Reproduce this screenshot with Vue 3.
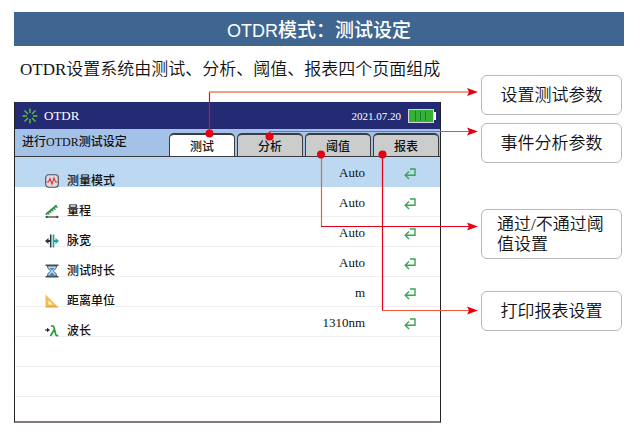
<script setup>
import { ref } from 'vue'

const tabs = ['测试', '分析', '阈值', '报表']
const active = ref('测试')

const rows = [
  { icon: 'wave', label: '测量模式', value: 'Auto' },
  { icon: 'range', label: '量程', value: 'Auto' },
  { icon: 'pulse', label: '脉宽', value: 'Auto' },
  { icon: 'timer', label: '测试时长', value: 'Auto' },
  { icon: 'unit', label: '距离单位', value: 'm' },
  { icon: 'lambda', label: '波长', value: '1310nm' },
]
const blankRows = 3
</script>

<template>
  <main class="page">
    <h1 class="title"><span class="latin">OTDR</span>模式：测试设定</h1>
    <p class="intro"><span class="regular">OTDR</span>设置系统由测试、分析、阈值、报表四个页面组成</p>

    <div class="figure">
      <section class="device">
        <header class="status">
          <svg class="logo" width="16" height="16" viewBox="0 0 16 16" fill="none" stroke="#56c63c" stroke-width="1.4">
            <path d="M8 0.500V5M8 11v4.500M0.500 8H5M11 8h4.500M2.500 2.500L6 6M10 10l3.500 3.500M13.500 2.500L10 6M6 10l-3.500 3.500" />
          </svg>
          <span class="brand">OTDR</span>
          <time class="date">2021.07.20</time>
          <svg class="battery" width="28" height="14" viewBox="0 0 28 14">
            <rect x="0.500" y="0.500" width="25" height="13" fill="#35b135" stroke="#d6d3e6" />
            <path d="M7.500 2v10M12.500 2v10M17.500 2v10" stroke="#1d7b3c" fill="none" />
            <rect x="26" y="3" width="2" height="8" fill="#fff" />
          </svg>
        </header>

        <div class="tabbar">
          <span class="caption">进行OTDR测试设定</span>
          <nav class="tabs">
            <button
              v-for="t in tabs"
              :key="t"
              type="button"
              class="tab"
              :class="{ active: t === active }"
              @click="active = t"
            >{{ t }}</button>
          </nav>
        </div>

        <table class="settings">
          <tbody>
            <tr v-for="(r, i) in rows" :key="r.label" :class="{ selected: i === 0 }">
              <th scope="row">
                <span class="name">
                  <svg class="icon" width="14" height="14" viewBox="0 0 14 14" fill="none">
                    <template v-if="r.icon === 'wave'">
                      <rect x="0.700" y="0.700" width="12.600" height="12.600" rx="3" fill="#dcdde4" stroke="#4b5260" stroke-width="1.100" />
                      <path d="M1.500 8H3.500L5 4.500L7 10L9 4L10.500 8H12.500" stroke="#e8322c" stroke-width="1.100" />
                    </template>
                    <template v-else-if="r.icon === 'range'">
                      <path d="M0.800 10.500L11.500 1.500" stroke="#2f8c46" stroke-width="1.800" />
                      <path d="M3 8.500l1.300 2.300M5 7l1.300 2.300M7 5.300l1.300 2.300M9 3.600l1.300 2.300M11 1.500l1.300 2.600" stroke="#2f8c46" stroke-width="1.200" />
                      <path d="M1 13h12" stroke="#3d3d3d" stroke-width="1.200" />
                      <path d="M0 13l2.500-1.500v3zM14 13l-2.500-1.500v3z" fill="#3d3d3d" />
                    </template>
                    <template v-else-if="r.icon === 'pulse'">
                      <path d="M5.700 0.500v13" stroke="#30343a" stroke-width="1.500" />
                      <path d="M8.500 0.500v13" stroke="#1aa6a6" stroke-width="1.700" />
                      <path d="M0 7l3.500-3v2H5v2H3.500v2z" fill="#30343a" />
                      <path d="M14 7l-3.500-3v2H9v2h1.500v2z" fill="#1aa6a6" />
                    </template>
                    <template v-else-if="r.icon === 'timer'">
                      <path d="M2.500 2h9c0 2.500-1.500 3.500-3.200 5c1.700 1.500 3.200 2.500 3.200 5h-9c0-2.500 1.500-3.500 3.200-5C4 5.500 2.500 4.500 2.500 2z" fill="#bcdcf2" stroke="#4a5560" />
                      <path d="M4.500 4h5L7 6.500zM3.500 11.500L7 8.500l3.500 3z" fill="#3288cf" />
                      <path d="M0.500 1.300h13M0.500 12.700h13" stroke="#454f59" stroke-width="1.600" />
                    </template>
                    <template v-else-if="r.icon === 'unit'">
                      <path fill-rule="evenodd" d="M0.500 0.500L13.500 13.500H0.500zM3.500 6.500v4h4z" fill="#f5bd4d" />
                      <path d="M1.500 12.800h11" stroke="#c8852b" stroke-dasharray="1 1" />
                    </template>
                    <template v-else>
                      <path d="M0 6h3" stroke="#222" stroke-width="1.200" />
                      <path d="M2 3.800L4.800 6L2 8.200z" fill="#222" />
                      <path d="M6 2.200c2-1 2.800 0.300 3.300 2.300l1.300 5.500c0.400 1.700 1.200 2 2.600 1.200M9.300 5.500L5.500 12" stroke="#22a136" stroke-width="1.700" />
                    </template>
                  </svg>
                  {{ r.label }}
                </span>
              </th>
              <td class="value">{{ r.value }}</td>
              <td class="action">
                <button type="button" class="enter" :aria-label="r.label">
                  <svg width="12" height="12" viewBox="0 0 12 12" fill="none" stroke="#3aa355" stroke-width="1.400">
                    <path d="M6 1h5v6.300H1.500M5 3.500L1.200 7.300L5 11" />
                  </svg>
                </button>
              </td>
            </tr>
            <tr v-for="n in blankRows" :key="n"><td colspan="3"></td></tr>
          </tbody>
        </table>
      </section>

      <aside class="notes">
        <p class="note">设置测试参数</p>
        <p class="note second">事件分析参数</p>
        <p class="note wrap">通过/不通过阈值设置</p>
        <p class="note last">打印报表设置</p>
      </aside>

      <svg class="leaders" viewBox="0 0 610 348" preserveAspectRatio="none" fill="none" stroke-width="1.200">
        <path d="M195.500 58V17" stroke="#d3122c" />
        <path d="M195 17H455" stroke="#f0805c" stroke-width="1.600" />
        <path d="M255.500 61V56.500H455" stroke="#ea4e30" />
        <path d="M307.500 79v72" stroke="#e8633f" />
        <path d="M307 151.500H455" stroke="#e2001a" />
        <path d="M368.500 79v156" stroke="#e2001a" />
        <path d="M368 235.500H455" stroke="#ee5a3a" />
        <g fill="#e60012">
          <circle cx="195.500" cy="58.500" r="4" />
          <circle cx="255.500" cy="61.500" r="4" />
          <circle cx="307" cy="79.500" r="4" />
          <circle cx="368.500" cy="79.500" r="4" />
          <path d="M453 13L464 17L453 21L455 17zM453 52.500L464 56.500L453 60.500L455 56.500zM453 147.500L464 151.500L453 155.500L455 151.500zM453 231.500L464 235.500L453 239.500L455 235.500z" />
        </g>
      </svg>
    </div>
  </main>
</template>

<style>
body {
  margin: 0;
  background: #fff;
}
</style>

<style scoped>
.page {
  padding: 12px 16px 16px 14px;
  font-family: "Liberation Serif", "Noto Sans CJK SC", serif;
  color: #111;
}
.title {
  margin: 0;
  height: 34px;
  line-height: 38px;
  background: #3e6691;
  color: #fff;
  text-align: center;
  font-family: "Liberation Sans", "Noto Sans CJK SC", sans-serif;
  font-size: 19px;
  font-weight: 500;
}
.latin {
  font-size: 18px;
}
.intro {
  margin: 12px 0 4px;
  padding-left: 6px;
  font-size: 17px;
  font-weight: 350;
  line-height: 24px;
}
.regular {
  font-weight: 400;
}
.figure {
  position: relative;
  display: grid;
  grid-template-columns: 427fr 141fr;
  column-gap: 40px;
  margin-top: -11px;
  padding: 27px 2px 0 0;
}
.device {
  border: 1px solid #222;
  border-top: 0;
  border-bottom: 2px solid #857a7a;
  align-self: start;
}
.status {
  display: flex;
  align-items: center;
  height: 27px;
  padding: 0 4px 0 7px;
  background: #242b73;
  color: #fff;
}
.brand {
  margin-left: 6px;
  font-size: 13px;
}
.date {
  margin-left: auto;
  font-size: 11px;
}
.battery {
  margin-left: 7px;
}
.tabbar {
  box-sizing: border-box;
  display: flex;
  align-items: stretch;
  height: 28px;
  background: #a4c2e7;
  border-bottom: 1px solid #3c3c40;
}
.caption {
  flex: 1;
  padding-left: 7px;
  font-size: 12px;
  font-weight: 500;
  line-height: 27px;
  white-space: nowrap;
}
.tabs {
  display: grid;
  grid-template-columns: repeat(4, 66px);
  column-gap: 2px;
  padding: 4px 1px 0 0;
}
.tab {
  margin: 0;
  padding: 0;
  border: 1px solid #3c3c40;
  border-top-width: 2px;
  border-bottom: 0;
  border-radius: 5px 5px 0 0;
  background: #cbcccc;
  color: #111;
  font: 500 12px "Noto Sans CJK SC", sans-serif;
  cursor: pointer;
}
.tab.active {
  background: #fff;
}
.settings {
  width: 100%;
  border-collapse: separate;
  border-spacing: 0;
  table-layout: fixed;
}
.settings th,
.settings td {
  box-sizing: border-box;
  height: 30px;
  padding: 0;
  border-bottom: 1px solid #efeff0;
  vertical-align: top;
}
.settings .selected th,
.settings .selected td {
  background: #bcd9f1;
  border-color: #bcd9f1;
}
.settings tr:last-child td {
  height: 24px;
  border-bottom: 0;
}
.settings th {
  text-align: left;
}
.name {
  display: flex;
  align-items: center;
  gap: 8px;
  height: 11px;
  padding: 18px 0 0 30px;
  font-size: 12px;
  font-weight: 500;
  line-height: 12px;
  color: #111;
}
.settings .value {
  width: 90px;
  padding-top: 4px;
  text-align: right;
  font-size: 13px;
  line-height: 24px;
  color: #111;
}
.action {
  width: 75px;
}
.enter {
  display: block;
  margin: 11px 0 0 39px;
  padding: 0;
  border: 0;
  background: none;
  line-height: 0;
  cursor: pointer;
}
.notes {
  display: flex;
  flex-direction: column;
  margin-top: -27px;
}
.note {
  box-sizing: border-box;
  margin: 0;
  min-height: 40px;
  padding: 8px 14px 6px;
  border: 1px solid #b9b9bb;
  border-radius: 6px;
  background: #fff;
  font-size: 17px;
  font-weight: 350;
  line-height: 24px;
  text-align: center;
}
.second {
  margin-top: 8px;
}
.wrap {
  margin-top: 46px;
  padding: 5px 14px 3px 15px;
  line-height: 20px;
  text-align: left;
}
.last {
  margin-top: 32px;
}
.leaders {
  position: absolute;
  top: 0;
  left: 0;
  width: 100%;
  height: 348px;
  pointer-events: none;
}
</style>
